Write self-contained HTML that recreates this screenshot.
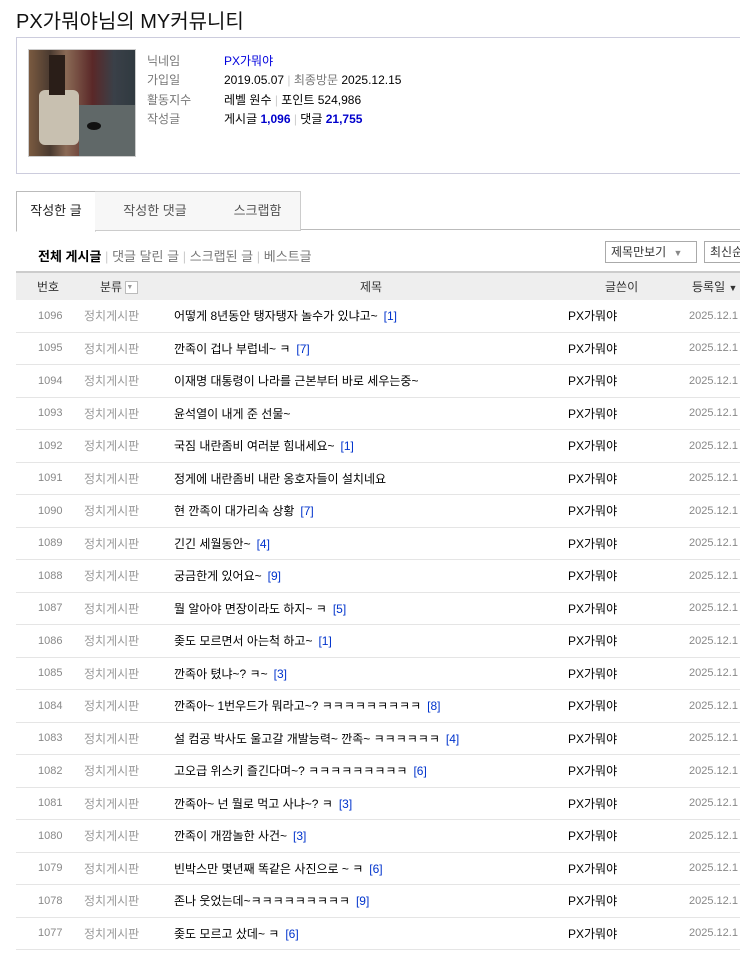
<!DOCTYPE html>
<html><head><meta charset="utf-8"><style>
body{margin:0;width:740px;height:955px;overflow:hidden;background:#fff;font-family:"Liberation Sans","Noto Sans CJK KR","NanumGothic",sans-serif;font-size:12px;color:#000;position:relative}
.a{position:absolute;white-space:nowrap}
.g{color:#777}
.b{color:#0000cc}
table{position:absolute;left:16px;top:271px;width:740px;border-collapse:collapse;font-size:12px;table-layout:fixed}
th{height:27px;background:#eee;border-top:2px solid #ccc;font-weight:normal;color:#333;padding:0}
td{height:31.5px;border-bottom:1px solid #e5e5e5;padding:0;white-space:nowrap;overflow:hidden}
td.n{color:#888;font-size:11px;padding-left:22px}
td.c{color:#999}
td.w{}
td.d{color:#888;font-size:11px}
td.t span{color:#0033cc;margin-left:6px}
</style></head><body>
<div class="a" style="left:16px;top:5px;font-size:20px;color:#111">PX가뭐야님의 MY커뮤니티</div>
<div class="a" style="left:16px;top:37px;width:740px;height:137px;border:1px solid #ccd;box-sizing:border-box"></div>
<div class="a" style="left:28px;top:49px;width:106px;height:106px;border:1px solid #ccc;background:linear-gradient(90deg,#7a5a40 0%,#4a3a30 20%,#8a6a55 35%,#5a2828 60%,#3a4048 80%,#303a40 100%)"><div style="position:absolute;left:10px;top:40px;width:40px;height:55px;background:#c8c0b0;border-radius:6px"></div><div style="position:absolute;left:20px;top:5px;width:16px;height:40px;background:#2a1e18"></div><div style="position:absolute;left:50px;top:55px;width:56px;height:51px;background:#606868"></div><div style="position:absolute;left:58px;top:72px;width:14px;height:8px;background:#111;border-radius:50%"></div></div>
<div class="a g" style="left:147px;top:52px">닉네임</div><div class="a" style="left:224px;top:52px;color:#0000dd">PX가뭐야</div>
<div class="a g" style="left:147px;top:71px">가입일</div><div class="a" style="left:224px;top:71px">2019.05.07 <span style="color:#ccc">|</span> <span class="g">최종방문</span> 2025.12.15</div>
<div class="a g" style="left:147px;top:91px">활동지수</div><div class="a" style="left:224px;top:91px">레벨 원수 <span style="color:#ccc">|</span> 포인트 524,986</div>
<div class="a g" style="left:147px;top:110px">작성글</div><div class="a" style="left:224px;top:110px">게시글 <b class="b">1,096</b> <span style="color:#ccc">|</span> 댓글 <b class="b">21,755</b></div>
<div class="a" style="left:16px;top:229px;width:724px;border-top:1px solid #bbb"></div>
<div class="a" style="left:16px;top:191px;width:78px;height:39px;border:1px solid #bbb;border-bottom:1px solid #fff;background:#fff;line-height:38px;font-size:13px;text-align:center;color:#222">작성한 글</div>
<div class="a" style="left:95px;top:191px;width:120px;height:38px;border:1px solid #ccc;border-left:none;background:#f7f7f7;line-height:38px;font-size:13px;text-align:center;color:#555">작성한 댓글</div>
<div class="a" style="left:215px;top:191px;width:85px;height:38px;border:1px solid #ccc;border-left:none;background:#f7f7f7;line-height:38px;font-size:13px;text-align:center;color:#555">스크랩함</div>
<div class="a" style="left:38px;top:246px;font-size:13px"><b>전체 게시글</b> <span style="color:#ccc">|</span> <span class="g">댓글 달린 글</span> <span style="color:#ccc">|</span> <span class="g">스크랩된 글</span> <span style="color:#ccc">|</span> <span class="g">베스트글</span></div>
<div class="a" style="left:605px;top:241px;width:92px;height:22px;border:1px solid #aaa;box-sizing:border-box;line-height:20px;padding-left:5px;color:#333">제목만보기 <span style="color:#888;font-size:9px;margin-left:4px">▼</span></div>
<div class="a" style="left:704px;top:241px;width:50px;height:22px;border:1px solid #aaa;box-sizing:border-box;line-height:20px;padding-left:5px;color:#333">최신순</div>
<table>
<colgroup><col style="width:68px"><col style="width:90px"><col style="width:394px"><col style="width:121px"><col style="width:67px"></colgroup>
<tr><th style="text-align:left;padding-left:21px">번호</th><th style="text-align:left;padding-left:16px">분류 <span style="display:inline-block;width:11px;height:11px;border:1px solid #bbb;background:#fff;font-size:7px;line-height:11px;color:#999;vertical-align:middle">▼</span></th><th>제목</th><th style="text-align:left;padding-left:37px">글쓴이</th><th style="text-align:left;padding-left:3px">등록일 <span style="font-size:9px">▼</span></th></tr>
<tr><td class="n">1096</td><td class="c">정치게시판</td><td class="t">어떻게 8년동안 탱자탱자 놀수가 있냐고~<span>[1]</span></td><td class="w">PX가뭐야</td><td class="d">2025.12.1</td></tr>
<tr><td class="n">1095</td><td class="c">정치게시판</td><td class="t">깐족이 겁나 부럽네~ ㅋ<span>[7]</span></td><td class="w">PX가뭐야</td><td class="d">2025.12.1</td></tr>
<tr><td class="n">1094</td><td class="c">정치게시판</td><td class="t">이재명 대통령이 나라를 근본부터 바로 세우는중~</td><td class="w">PX가뭐야</td><td class="d">2025.12.1</td></tr>
<tr><td class="n">1093</td><td class="c">정치게시판</td><td class="t">윤석열이 내게 준 선물~</td><td class="w">PX가뭐야</td><td class="d">2025.12.1</td></tr>
<tr><td class="n">1092</td><td class="c">정치게시판</td><td class="t">국짐 내란좀비 여러분 힘내세요~<span>[1]</span></td><td class="w">PX가뭐야</td><td class="d">2025.12.1</td></tr>
<tr><td class="n">1091</td><td class="c">정치게시판</td><td class="t">정게에 내란좀비 내란 옹호자들이 설치네요</td><td class="w">PX가뭐야</td><td class="d">2025.12.1</td></tr>
<tr><td class="n">1090</td><td class="c">정치게시판</td><td class="t">현 깐족이 대가리속 상황<span>[7]</span></td><td class="w">PX가뭐야</td><td class="d">2025.12.1</td></tr>
<tr><td class="n">1089</td><td class="c">정치게시판</td><td class="t">긴긴 세월동안~<span>[4]</span></td><td class="w">PX가뭐야</td><td class="d">2025.12.1</td></tr>
<tr><td class="n">1088</td><td class="c">정치게시판</td><td class="t">궁금한게 있어요~<span>[9]</span></td><td class="w">PX가뭐야</td><td class="d">2025.12.1</td></tr>
<tr><td class="n">1087</td><td class="c">정치게시판</td><td class="t">뭘 알아야 면장이라도 하지~ ㅋ<span>[5]</span></td><td class="w">PX가뭐야</td><td class="d">2025.12.1</td></tr>
<tr><td class="n">1086</td><td class="c">정치게시판</td><td class="t">좆도 모르면서 아는척 하고~<span>[1]</span></td><td class="w">PX가뭐야</td><td class="d">2025.12.1</td></tr>
<tr><td class="n">1085</td><td class="c">정치게시판</td><td class="t">깐족아 텼냐~? ㅋ~<span>[3]</span></td><td class="w">PX가뭐야</td><td class="d">2025.12.1</td></tr>
<tr><td class="n">1084</td><td class="c">정치게시판</td><td class="t">깐족아~ 1번우드가 뭐라고~? ㅋㅋㅋㅋㅋㅋㅋㅋㅋ<span>[8]</span></td><td class="w">PX가뭐야</td><td class="d">2025.12.1</td></tr>
<tr><td class="n">1083</td><td class="c">정치게시판</td><td class="t">설 컴공 박사도 울고갈 개발능력~ 깐족~ ㅋㅋㅋㅋㅋㅋ<span>[4]</span></td><td class="w">PX가뭐야</td><td class="d">2025.12.1</td></tr>
<tr><td class="n">1082</td><td class="c">정치게시판</td><td class="t">고오급 위스키 즐긴다며~? ㅋㅋㅋㅋㅋㅋㅋㅋㅋ<span>[6]</span></td><td class="w">PX가뭐야</td><td class="d">2025.12.1</td></tr>
<tr><td class="n">1081</td><td class="c">정치게시판</td><td class="t">깐족아~ 넌 뭘로 먹고 사냐~? ㅋ<span>[3]</span></td><td class="w">PX가뭐야</td><td class="d">2025.12.1</td></tr>
<tr><td class="n">1080</td><td class="c">정치게시판</td><td class="t">깐족이 개깜놀한 사건~<span>[3]</span></td><td class="w">PX가뭐야</td><td class="d">2025.12.1</td></tr>
<tr><td class="n">1079</td><td class="c">정치게시판</td><td class="t">빈박스만 몇년째 똑같은 사진으로 ~ ㅋ<span>[6]</span></td><td class="w">PX가뭐야</td><td class="d">2025.12.1</td></tr>
<tr><td class="n">1078</td><td class="c">정치게시판</td><td class="t">존나 웃었는데~ㅋㅋㅋㅋㅋㅋㅋㅋㅋ<span>[9]</span></td><td class="w">PX가뭐야</td><td class="d">2025.12.1</td></tr>
<tr><td class="n">1077</td><td class="c">정치게시판</td><td class="t">좆도 모르고 샀데~ ㅋ<span>[6]</span></td><td class="w">PX가뭐야</td><td class="d">2025.12.1</td></tr>
</table>
</body></html>
